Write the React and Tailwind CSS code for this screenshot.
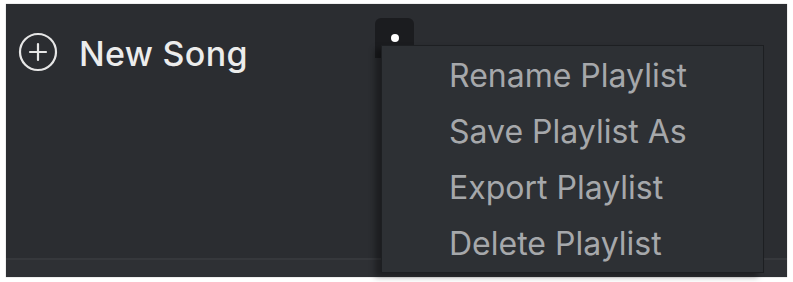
import { useState } from 'react';

const menuItems = ['Rename Playlist', 'Save Playlist As', 'Export Playlist', 'Delete Playlist'];

export default function App() {
  const [open] = useState(true);

  return (
    <main className="min-h-screen bg-white pt-[4px] pl-[6px] font-['Inter',sans-serif]">
      <div className="relative flex h-[273px] w-[781px] flex-col bg-[#2b2d31] shadow-[0_0_1px_#9a9a9a]">
        {/* HEADER */}
        <div className="flex flex-1 items-start">
          <div className="w-[369px] pl-[12px] pt-[28px]">
            <button className="flex items-center gap-[21px] text-[#ececec]">
              <svg width="40" height="40" viewBox="0 0 40 40" fill="none" stroke="#e6e6e6" strokeWidth="2.2" strokeLinecap="round">
                <circle cx="20" cy="20" r="18" />
                <path d="M20 12v16M12 20h16" />
              </svg>
              <span className="pt-[3px] text-[34px] font-medium leading-none tracking-[0.3px]">New Song</span>
            </button>
          </div>
          <button className="mt-[14px] flex h-[40px] w-[39px] items-start justify-start rounded-t-[6px] bg-[#1b1c1f] pl-[16px] pt-[16px]">
            <span className="h-[8px] w-[8px] rounded-full bg-white" />
          </button>
        </div>

        {/* FOOTER */}
        <div className="h-[19px] border-t-2 border-[#36383c] bg-[#2e3034]" />

        {/* MENU */}
        {open && (
          <div className="absolute left-[375px] top-[41px] w-[383px] border border-[#1d1f22] bg-[#2d3034] pt-[2px] shadow-[-6px_4px_6px_rgba(0,0,0,0.35)]">
            {menuItems.map((item) => (
              <div key={item} className="flex h-[56px] items-center pl-[67px] text-[32px] leading-none text-[#a6a8ab]">
                {item}
              </div>
            ))}
          </div>
        )}
      </div>
    </main>
  );
}
